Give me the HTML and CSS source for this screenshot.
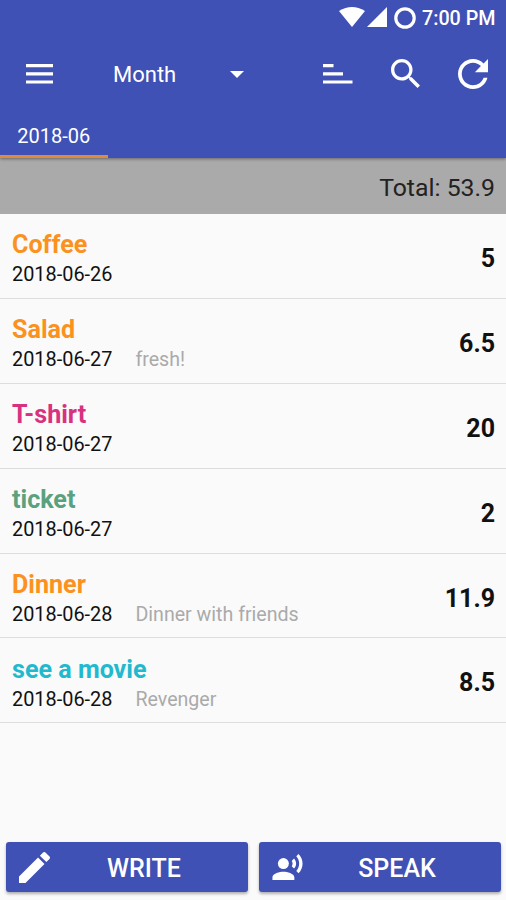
FILE: index.html
```html
<!DOCTYPE html>
<html lang="en">
<head>
<meta charset="utf-8">
<title>Expenses</title>
<link rel="stylesheet" href="styles.css">
</head>
<body>
<div class="app">
  <header class="header">
    <div class="status">
      <svg class="wifi" viewBox="0 0 26 20"><path d="M13 20 0 4Q13-4 26 4Z"/></svg>
      <svg class="signal" viewBox="0 0 20 20"><path d="M0 20 20 0V20Z"/></svg>
      <svg class="battery" viewBox="0 0 22 22"><circle cx="11" cy="11" r="9.2"/></svg>
      <span class="clock">7:00 PM</span>
    </div>
    <div class="toolbar">
      <svg class="menu" viewBox="0 0 27 20"><path d="M0 0h27v3.2H0zM0 8.2h27v3.2H0zM0 16.4h27v3.2H0z"/></svg>
      <span class="period">Month</span>
      <svg class="caret" viewBox="0 0 14 7"><path d="M0 0h14L7 7z"/></svg>
      <svg class="sort" viewBox="0 0 30 20"><path d="M0 0h10.5v3.2H0zM0 8.2h20v3.2H0zM0 16.4h29.5v3.2H0z"/></svg>
      <svg class="search" viewBox="3 3 17.5 17.5"><path d="M15.5 14h-.79l-.28-.27C15.41 12.59 16 11.11 16 9.5 16 5.91 13.09 3 9.5 3S3 5.91 3 9.5 5.91 16 9.5 16c1.61 0 3.09-.59 4.23-1.57l.27.28v.79l5 4.99L20.49 19l-4.99-5zm-6 0C7.01 14 5 11.99 5 9.5S7.01 5 9.5 5 14 7.01 14 9.5 11.99 14 9.5 14z"/></svg>
      <svg class="refresh" viewBox="4 4 16 16"><path d="M17.65 6.35C16.2 4.9 14.21 4 12 4c-4.42 0-7.99 3.58-7.99 8s3.57 8 7.99 8c3.73 0 6.84-2.55 7.73-6h-2.08c-.82 2.33-3.04 4-5.65 4-3.31 0-6-2.69-6-6s2.69-6 6-6c1.66 0 3.14.69 4.22 1.78L13 11h7V4l-2.35 2.35z"/></svg>
    </div>
    <nav class="tabs"><span class="tab">2018-06</span></nav>
  </header>
  <div class="total">Total: 53.9</div>
  <main class="list">
    <div class="row"><div class="info"><div class="name orange">Coffee</div><div class="meta"><span>2018-06-26</span></div></div><div class="amount">5</div></div>
    <div class="row"><div class="info"><div class="name orange">Salad</div><div class="meta"><span>2018-06-27</span><span class="note">fresh!</span></div></div><div class="amount">6.5</div></div>
    <div class="row"><div class="info"><div class="name pink">T-shirt</div><div class="meta"><span>2018-06-27</span></div></div><div class="amount">20</div></div>
    <div class="row"><div class="info"><div class="name green">ticket</div><div class="meta"><span>2018-06-27</span></div></div><div class="amount">2</div></div>
    <div class="row"><div class="info"><div class="name orange">Dinner</div><div class="meta"><span>2018-06-28</span><span class="note">Dinner with friends</span></div></div><div class="amount">11.9</div></div>
    <div class="row"><div class="info"><div class="name cyan">see a movie</div><div class="meta"><span>2018-06-28</span><span class="note">Revenger</span></div></div><div class="amount">8.5</div></div>
  </main>
  <footer class="actions">
    <button class="btn">
      <svg class="pencil" viewBox="3 3 18 18"><path d="M3 17.25V21h3.75L17.81 9.94l-3.75-3.75L3 17.25zM20.71 7.04c.39-.39.39-1.02 0-1.41l-2.34-2.34c-.39-.39-1.02-.39-1.41 0l-1.83 1.83 3.75 3.75 1.83-1.83z"/></svg>
      <span class="label">WRITE</span>
    </button>
    <button class="btn">
      <svg class="voice" viewBox="1 2 22 19"><circle cx="9" cy="9" r="4"/><path d="M9 15c-2.67 0-8 1.34-8 4v2h16v-2c0-2.66-5.33-4-8-4zm7.76-9.64l-1.68 1.69c.84 1.18.84 2.71 0 3.89l1.68 1.69c2.02-2.02 2.02-5.07 0-7.27zM20.07 2l-1.63 1.63c2.77 3.02 2.77 7.56 0 10.74L20.07 16c3.9-3.89 3.91-9.95 0-14z"/></svg>
      <span class="label">SPEAK</span>
    </button>
  </footer>
</div>
</body>
</html>
```
FILE: styles.css
```css
* { box-sizing: border-box; }
body { margin: 0; background: #fafafa; font-family: Roboto, sans-serif; color: #111; }
svg { display: block; flex: none; fill: #fff; }
.app { width: 506px; height: 900px; display: flex; flex-direction: column; overflow: hidden; }
.header { height: 158px; flex: none; background: #3f51b5; color: #fff; box-shadow: 0 1px 3px rgba(0,0,0,.4); z-index: 1; }
.status { height: 35px; display: flex; align-items: center; justify-content: flex-end; padding-right: 11px; }
.wifi { width: 26px; height: 20px; margin: 0 1.5px 1px 0; }
.signal { width: 20px; height: 20px; margin: 0 7.5px 1px 0; }
.battery { width: 22px; height: 22px; margin-right: 6px; fill: none; stroke: #fff; stroke-width: 3.2; }
.clock { font-size: 19.7px; font-weight: 500; line-height: 24px; width: 73px; padding-top: 2px; white-space: nowrap; }
.toolbar { height: 77px; display: flex; align-items: center; padding: 0 18px 0 26px; }
.menu { width: 27px; height: 20px; }
.period { font-size: 22px; margin-left: 60px; width: 117px; line-height: 28px; padding-top: 3px; }
.caret { width: 14px; height: 7px; margin-top: 1px; }
.sort { width: 30px; height: 20px; margin-left: 79px; }
.search { width: 29px; height: 29px; margin-left: auto; margin-right: 38.5px; }
.refresh { width: 30px; height: 30px; }
.tabs { height: 46px; }
.tab { display: block; width: 107.5px; height: 46px; border-bottom: 3px solid #e08a3c; text-align: center; font-size: 20px; line-height: 48px; }
.total { height: 56px; flex: none; background: #aaa; text-align: right; padding-right: 11px; font-size: 24.8px; line-height: 59px; color: #222; }
.list { flex: 1; }
.row { height: 84.9px; display: flex; align-items: center; justify-content: space-between; padding: 5px 11px 0 12px; border-bottom: 1px solid #ddd; }
.info { padding-top: 4px; }
.name { font-size: 25.1px; font-weight: 700; line-height: 30px; }
.meta { display: flex; gap: 23px; font-size: 19.9px; line-height: 30px; }
.note { color: #aaa; font-size: 19.6px; }
.amount { font-size: 25px; font-weight: 700; }
.orange { color: #fb9220; }
.pink { color: #d83180; }
.green { color: #5ba17f; }
.cyan { color: #22b9ce; }
.actions { display: grid; grid-template-columns: 1fr 1fr; gap: 11px; padding: 0 5px 8px 6px; }
.btn { height: 50px; display: flex; align-items: center; border: 0; border-radius: 3px; background: #3f51b5; color: #fff; padding: 0 0 0 13px; box-shadow: 0 2px 3px rgba(0,0,0,.3); font: 500 25px Roboto, sans-serif; }
.pencil { width: 31px; height: 31px; }
.voice { width: 31px; height: 26px; }
.label { flex: 1; text-align: center; padding: 2px 10px 0 0; }
```
